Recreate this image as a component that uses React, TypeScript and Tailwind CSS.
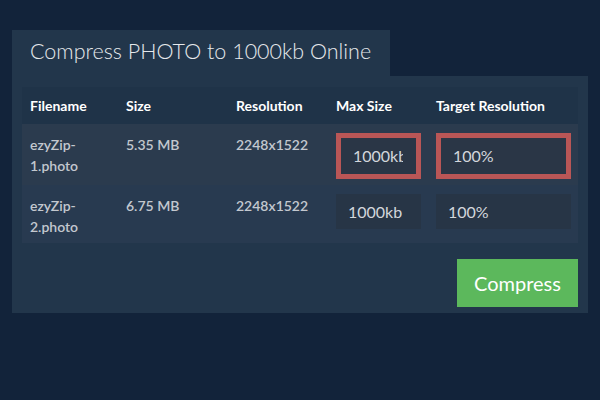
import React from "react";

const rows = [
  { name: ["ezyZip-", "1.photo"], size: "5.35 MB", res: "2248x1522", highlight: true },
  { name: ["ezyZip-", "2.photo"], size: "6.75 MB", res: "2248x1522", highlight: false },
];

export default function App() {
  return (
    <div
      className="w-[600px] h-[400px] bg-[#12233a] pt-[30px] pl-[12px] pr-[12px]"
      style={{ fontFamily: "Lato, 'Open Sans', sans-serif" }}
    >
      <div className="w-[378px] h-[46px] bg-[#22364b] pl-[18px] pb-[4px] flex items-center">
        <span className="text-[21.5px] text-[#e6e9ec] font-light">Compress PHOTO to 1000kb Online</span>
      </div>
      <div className="w-[576px] bg-[#22364b] pt-[11px] pl-[10px] pr-[10px] pb-[6px] flex flex-col">
        <div className="w-[556px] flex flex-col text-[14px]">
          <div className="h-[37px] bg-[#1f3348] grid grid-cols-[96px_110px_100px_100px_150px] items-center font-bold text-white">
            <div className="pl-[8px]">Filename</div>
            <div className="pl-[8px]">Size</div>
            <div className="pl-[8px]">Resolution</div>
            <div className="pl-[8px]">Max Size</div>
            <div className="pl-[8px]">Target Resolution</div>
          </div>
          {rows.map((r, i) => (
            <div
              key={i}
              className={
                "grid grid-cols-[96px_110px_100px_100px_150px] text-[#c3c8cf] font-semibold " +
                (r.highlight ? "h-[61px] bg-[#2b3b4e]" : "h-[58px] bg-[#283a50]")
              }
            >
              <div className="pl-[8px] pt-[10px] leading-[21px]">
                {r.name[0]}
                <br />
                {r.name[1]}
              </div>
              <div className="pl-[8px] pt-[10px] leading-[21px]">{r.size}</div>
              <div className="pl-[8px] pt-[10px] leading-[21px]">{r.res}</div>
              <div className="pl-[8px] pt-[9px]">
                {r.highlight ? (
                  <div className="w-[85px] h-[46px] border-[5px] border-[#b95656] bg-[#2a3646] pl-[12px] flex items-center text-[16px] font-normal text-[#d3d7dc]">
                    <div className="w-[50px] overflow-hidden whitespace-nowrap">1000kb</div>
                  </div>
                ) : (
                  <div className="w-[85px] h-[35px] bg-[#273546] pl-[12px] flex items-center text-[16px] font-normal text-[#d3d7dc]">
                    1000kb
                  </div>
                )}
              </div>
              <div className="pl-[8px] pt-[9px]">
                {r.highlight ? (
                  <div className="w-[135px] h-[46px] border-[5px] border-[#b95656] bg-[#2a3646] pl-[12px] flex items-center text-[16px] font-normal text-[#d3d7dc]">
                    100%
                  </div>
                ) : (
                  <div className="w-[135px] h-[35px] bg-[#273546] pl-[12px] flex items-center text-[16px] font-normal text-[#d3d7dc]">
                    100%
                  </div>
                )}
              </div>
            </div>
          ))}
        </div>
        <div className="flex justify-end mt-[16px]">
          <button className="w-[121px] h-[48px] bg-[#5cb85c] text-white text-[20px] flex items-center justify-center">
            Compress
          </button>
        </div>
      </div>
    </div>
  );
}
